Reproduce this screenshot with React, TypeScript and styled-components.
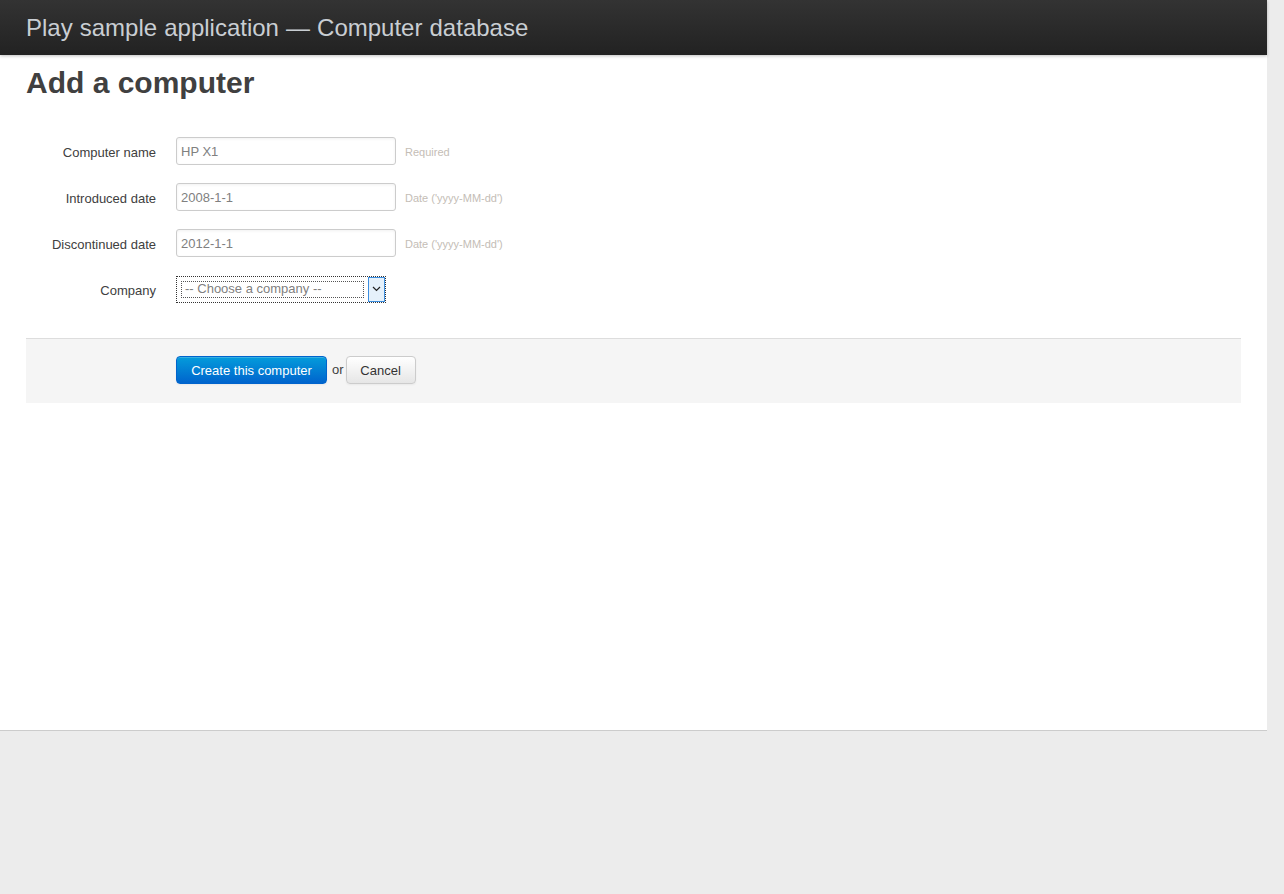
import React from "react";
import styled, { createGlobalStyle } from "styled-components";

const Global = createGlobalStyle`
  html, body { margin: 0; padding: 0; background: #ececec; }
  body { font-family: "Liberation Sans", Arial, Helvetica, sans-serif; font-size: 13px; line-height: 18px; color: #404040; }
`;

const Page = styled.div`
  width: 1267px;
  min-height: 894px;
  display: flex;
  flex-direction: column;
`;

const Main = styled.div`
  background: #fff;
  height: 731px;
  border-bottom: 1px solid #cccccc;
  box-sizing: border-box;
  display: flex;
  flex-direction: column;
`;

const Topbar = styled.header`
  height: 55px;
  background: linear-gradient(to bottom, #333333, #222222);
  box-shadow: 0 1px 3px rgba(0, 0, 0, 0.25);
  display: flex;
  align-items: center;
  padding-left: 26px;
  position: relative;
  z-index: 1;
`;

const Brand = styled.h1`
  margin: 0;
  font-size: 24px;
  font-weight: normal;
  color: #c9ced3;
  word-spacing: 0.4px;
  line-height: 30px;
`;

const Content = styled.section`
  padding: 12px 26px 0 26px;
`;

const Title = styled.h2`
  margin: 0;
  font-size: 30px;
  line-height: 32px;
  font-weight: bold;
  color: #404040;
`;

const Form = styled.form`
  margin-top: 38px;
  display: flex;
  flex-direction: column;
`;

const Fields = styled.div`
  display: flex;
  flex-direction: column;
  gap: 18px;
  padding-bottom: 35px;
`;

const Row = styled.div`
  display: flex;
  align-items: center;
  height: 28px;
`;

const Label = styled.label`
  width: 130px;
  text-align: right;
  padding-right: 20px;
  font-size: 13px;
  color: #404040;
  padding-top: 4px;
`;

const Input = styled.input`
  width: 220px;
  height: 28px;
  box-sizing: border-box;
  border: 1px solid #cccccc;
  border-radius: 3px;
  padding: 4px;
  font-family: "Liberation Sans", Arial, sans-serif;
  font-size: 13px;
  color: #808080;
  box-shadow: inset 0 1px 3px rgba(0, 0, 0, 0.06);
  outline: none;
`;

const Help = styled.span`
  margin-left: 9px;
  font-size: 11px;
  color: #c4bdb6;
  padding-top: 2px;
`;

const SelectBox = styled.div`
  width: 210px;
  height: 27px;
  box-sizing: border-box;
  border: 1px dotted #333;
  display: flex;
  align-items: center;
  padding: 0 0 0 4px;
  background: #fff;
`;

const SelectText = styled.div`
  flex: 1;
  height: 17px;
  box-sizing: border-box;
  border: 1px dotted #555;
  display: flex;
  align-items: center;
  padding-left: 3px;
  color: #808080;
  font-size: 13px;
  margin-right: 4px;
`;

const Arrow = styled.div`
  width: 17px;
  height: 25px;
  box-sizing: border-box;
  border: 1px solid #3c8ee0;
  background: #e5f1fb;
  display: flex;
  align-items: center;
  justify-content: center;
`;

const Actions = styled.div`
  background: #f5f5f5;
  border-top: 1px solid #dddddd;
  height: 65px;
  box-sizing: border-box;
  display: flex;
  align-items: center;
  padding-left: 150px;
  padding-bottom: 2px;
`;

const Button = styled.button<{ $primary?: boolean }>`
  height: 28px;
  box-sizing: border-box;
  font-family: "Liberation Sans", Arial, sans-serif;
  font-size: 13px;
  border-radius: 4px;
  cursor: pointer;
  width: ${(p) => (p.$primary ? "151px" : "70px")};
  padding: 0;
  color: ${(p) => (p.$primary ? "#ffffff" : "#333333")};
  border: 1px solid ${(p) => (p.$primary ? "#0064cd" : "#cccccc")};
  background: ${(p) =>
    p.$primary
      ? "linear-gradient(to bottom, #049cdb, #0064cd)"
      : "linear-gradient(to bottom, #ffffff, #e6e6e6)"};
  box-shadow: inset 0 1px 0 rgba(255,255,255,0.2), 0 1px 2px rgba(0,0,0,0.05);
`;

const Or = styled.span`
  margin: 0 2px 0 5px;
  font-size: 13px;
  color: #404040;
`;

export default function App() {
  return (
    <>
      <Global />
      <Page>
        <Main>
          <Topbar>
            <Brand>Play sample application — Computer database</Brand>
          </Topbar>
          <Content>
            <Title>Add a computer</Title>
            <Form onSubmit={(e) => e.preventDefault()}>
              <Fields>
                <Row>
                  <Label>Computer name</Label>
                  <Input defaultValue="HP X1" />
                  <Help>Required</Help>
                </Row>
                <Row>
                  <Label>Introduced date</Label>
                  <Input defaultValue="2008-1-1" />
                  <Help>Date ('yyyy-MM-dd')</Help>
                </Row>
                <Row>
                  <Label>Discontinued date</Label>
                  <Input defaultValue="2012-1-1" />
                  <Help>Date ('yyyy-MM-dd')</Help>
                </Row>
                <Row>
                  <Label>Company</Label>
                  <SelectBox>
                    <SelectText>-- Choose a company --</SelectText>
                    <Arrow>
                      <svg width="9" height="6" viewBox="0 0 9 6">
                        <path d="M1 1 L4.5 4.5 L8 1" fill="none" stroke="#222" strokeWidth="1.2" />
                      </svg>
                    </Arrow>
                  </SelectBox>
                </Row>
              </Fields>
              <Actions>
                <Button $primary type="submit">Create this computer</Button>
                <Or>or</Or>
                <Button type="button">Cancel</Button>
              </Actions>
            </Form>
          </Content>
        </Main>
      </Page>
    </>
  );
}
